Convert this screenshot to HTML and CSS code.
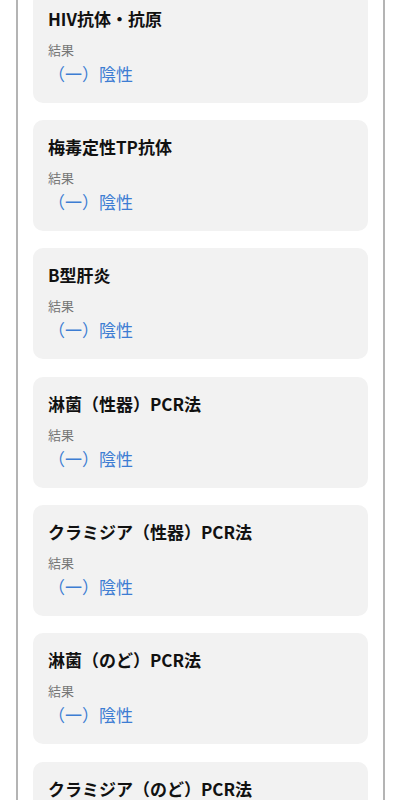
FILE: index.html
```html
<!DOCTYPE html>
<html>
<head>
    <meta charset="utf-8">
    <title>検査結果</title>
    <link rel="stylesheet" href="styles.css">
</head>
<body>
<div class="page">
    <div class="result-list">
        <div class="result-card">
            <p class="test-name">HIV抗体・抗原</p>
            <p class="label">結果</p>
            <p class="value">（一）陰性</p>
        </div>
        <div class="result-card">
            <p class="test-name">梅毒定性TP抗体</p>
            <p class="label">結果</p>
            <p class="value">（一）陰性</p>
        </div>
        <div class="result-card">
            <p class="test-name">B型肝炎</p>
            <p class="label">結果</p>
            <p class="value">（一）陰性</p>
        </div>
        <div class="result-card">
            <p class="test-name">淋菌（性器）PCR法</p>
            <p class="label">結果</p>
            <p class="value">（一）陰性</p>
        </div>
        <div class="result-card">
            <p class="test-name">クラミジア（性器）PCR法</p>
            <p class="label">結果</p>
            <p class="value">（一）陰性</p>
        </div>
        <div class="result-card">
            <p class="test-name">淋菌（のど）PCR法</p>
            <p class="label">結果</p>
            <p class="value">（一）陰性</p>
        </div>
        <div class="result-card">
            <p class="test-name">クラミジア（のど）PCR法</p>
            <p class="label">結果</p>
            <p class="value">（一）陰性</p>
        </div>
    </div>
</div>
</body>
</html>
```

FILE: styles.css
```css
html, body{
    margin: 0;
    padding: 0;
    height: 100%;
    overflow: hidden;
    background: #fff;
}
p{
    margin: 0;
    padding: 0;
}
body{
    font-family: "Noto Sans CJK JP", "Noto Sans", sans-serif;
    color: #111;
}
.page{
    box-sizing: border-box;
    margin-left: 16px;
    width: 369px;
    min-height: 100%;
    border-left: 2px solid #b4b4b4;
    border-right: 2px solid #b4b4b4;
    padding: 0 15px;
}
.result-list{
    display: flex;
    flex-direction: column;
    gap: 17.4px;
    margin-top: -8.5px;
}
.result-card{
    background: #f2f2f2;
    border-radius: 10px;
    padding: 15px 15px 17px;
    height: 111px;
    box-sizing: border-box;
}
.test-name{
    font-size: 17px;
    font-weight: bold;
    line-height: 24px;
    margin-bottom: 9px;
    white-space: nowrap;
}
.label{
    font-size: 13px;
    line-height: 20px;
    color: #777;
    margin-bottom: 2px;
}
.value{
    font-size: 17px;
    line-height: 24px;
    color: #3d7dd3;
}
```
